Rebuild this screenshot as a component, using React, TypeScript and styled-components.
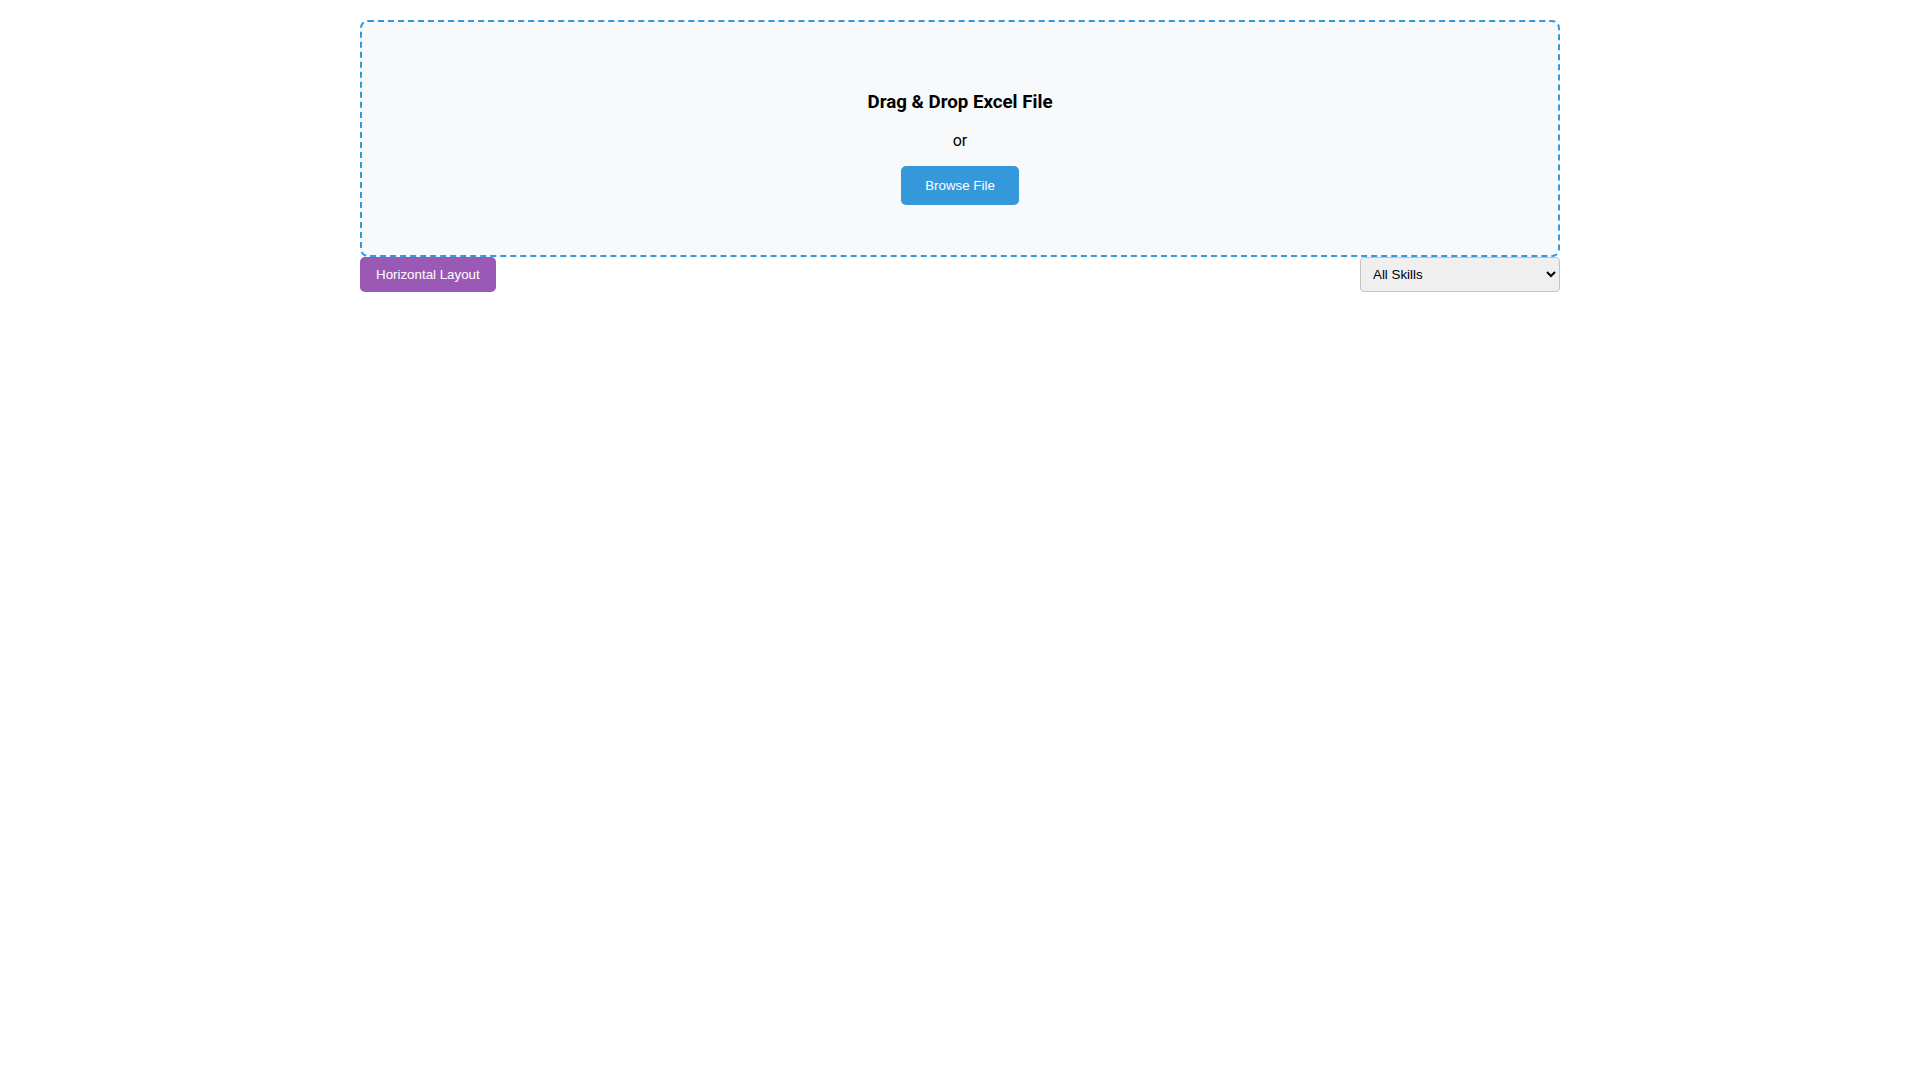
import React, { useState } from "react";
import styled, { createGlobalStyle } from "styled-components";

const GlobalStyle = createGlobalStyle`
    body {
        margin: 0;
        font-family: Roboto, "Liberation Sans", Arial, sans-serif;
        background: #ffffff;
        color: #000000;
    }
`;

const Page = styled.div`
    max-width: 1200px;
    margin: 0 auto;
    padding: 20px 0;
`;

const DropZone = styled.div<{ $active: boolean }>`
    border: 2px dashed #3498db;
    border-radius: 8px;
    padding: 50px;
    text-align: center;
    background: ${({ $active }) => ($active ? "#eaf4fc" : "#f8f9fa")};
`;

const Title = styled.h3`
    font-size: 18.72px;
    font-weight: 700;
    margin: 18.72px 0;
`;

const OrText = styled.p`
    font-size: 16px;
    margin: 16px 0;
`;

const BaseButton = styled.button`
    font-family: "Liberation Sans", Arial, sans-serif;
    font-size: 13.33px;
    color: #ffffff;
    border: none;
    border-radius: 5px;
    cursor: pointer;
`;

const BrowseButton = styled(BaseButton)`
    background: #3498db;
    padding: 12px 24px;
`;

const LayoutButton = styled(BaseButton)`
    background: #9b59b6;
    padding: 10px 16px;
`;

const Controls = styled.div`
    display: flex;
    justify-content: space-between;
    align-items: center;
`;

const SkillSelect = styled.select`
    font-family: "Liberation Sans", Arial, sans-serif;
    font-size: 13.33px;
    width: 200px;
    padding: 8px;
    border: 1px solid #c4c4c4;
    border-radius: 4px;
    background: #efefef;
    color: #000000;
`;

const App: React.FC = () => {
    const [dragging, setDragging] = useState(false);
    const [horizontal, setHorizontal] = useState(true);
    const [skill, setSkill] = useState("all");

    return (
        <Page>
            <GlobalStyle />
            <DropZone
                $active={dragging}
                onDragOver={(e) => {
                    e.preventDefault();
                    setDragging(true);
                }}
                onDragLeave={() => setDragging(false)}
                onDrop={(e) => {
                    e.preventDefault();
                    setDragging(false);
                }}
            >
                <Title>Drag &amp; Drop Excel File</Title>
                <OrText>or</OrText>
                <BrowseButton type="button">Browse File</BrowseButton>
            </DropZone>

            <Controls>
                <LayoutButton type="button" onClick={() => setHorizontal(!horizontal)}>
                    {horizontal ? "Horizontal Layout" : "Vertical Layout"}
                </LayoutButton>
                <SkillSelect value={skill} onChange={(e) => setSkill(e.target.value)}>
                    <option value="all">All Skills</option>
                </SkillSelect>
            </Controls>
        </Page>
    );
};

export default App;
